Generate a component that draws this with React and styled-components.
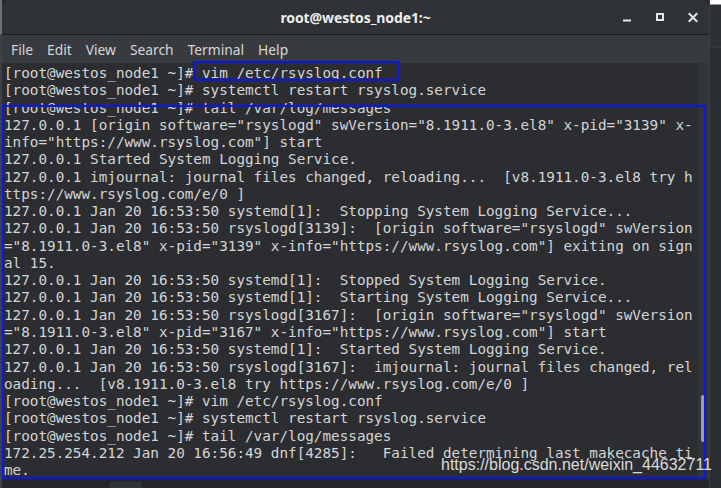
import React from "react";
import styled, { createGlobalStyle } from "styled-components";

const GlobalStyle = createGlobalStyle`
  html, body { margin: 0; padding: 0; background: #26282b; overflow: hidden; }
  #root { width: 721px; height: 488px; }
`;

const Page = styled.div`
  position: relative;
  display: flex;
  width: 721px;
  height: 488px;
  background: #26282b;
  overflow: hidden;
`;

const LeftEdge = styled.div`
  width: 2px;
  flex: none;
  background: linear-gradient(#6e7073 0, #6e7073 34px, #3d4044 35px, #3d4044 100%);
`;

const Window = styled.div`
  width: 707px;
  flex: none;
  display: flex;
  flex-direction: column;
`;

const Frame = styled.div`
  display: flex;
  flex-direction: column;
  height: 479px;
  border-radius: 7px 7px 0 0;
  overflow: hidden;
  background: #2c2e32;
`;

const TitleBar = styled.div`
  height: 34px;
  flex: none;
  display: grid;
  grid-template-columns: 1fr auto 1fr;
  align-items: center;
  background: #2f3236;
  border-bottom: 1px solid #1c1e21;
`;

const Title = styled.div`
  grid-column: 2;
  font-family: "Noto Sans", "DejaVu Sans", sans-serif;
  font-weight: 700;
  font-size: 14px;
  color: #eeeeec;
  letter-spacing: -0.1px;
`;

const Controls = styled.div`
  grid-column: 3;
  justify-self: end;
  display: flex;
  gap: 17px;
  padding-right: 8px;
  color: #e6e6e6;
  svg { display: block; }
`;

const MenuBar = styled.div`
  height: 28px;
  flex: none;
  display: flex;
  align-items: center;
  gap: 14px;
  padding-left: 9px;
  background: #373a3f;
`;

const MenuItem = styled.span`
  font-family: "Noto Sans", "DejaVu Sans", sans-serif;
  font-size: 13.8px;
  color: #d6d7d8;
`;

const TermArea = styled.div`
  flex: 1;
  display: flex;
  background: #2b2d31;
  min-height: 0;
`;

const TermText = styled.pre`
  flex: 1;
  margin: 0;
  padding: 2px 0 0 2px;
  font-family: "DejaVu Sans Mono", monospace;
  font-size: 14.3px;
  line-height: 17.26px;
  color: #d4d5d6;
  white-space: pre;
  overflow: hidden;
`;

const ScrollTrack = styled.div`
  width: 11px;
  flex: none;
  display: flex;
  flex-direction: column;
  padding-top: 332px;
  background: #313438;
`;

const ScrollThumb = styled.div`
  width: 4px;
  height: 47px;
  margin-left: 3px;
  border-radius: 2px;
  background: #9c9ea1;
`;

const BottomStrip = styled.div`
  flex: 1;
  display: flex;
  padding-left: 108px;
  padding-top: 3px;
  background: #24262a;
`;

const BottomBlock = styled.div`
  width: 32px;
  background: #303337;
`;

const RightSide = styled.div`
  flex: 1;
  border-left: 1px solid #3b3e42;
  background: linear-gradient(#ffffff 0, #ffffff 4px, #2d3034 5px, #2d3034 46px, #3a3d41 47px, #2a2d30 48px, #2a2d30 100%);
`;

const Mark = styled.div`
  position: absolute;
  left: ${(p) => p.$x}px;
  top: ${(p) => p.$y}px;
  width: ${(p) => p.$w}px;
  height: ${(p) => p.$h}px;
  box-sizing: border-box;
  border: 2px solid #0c14f0;
  pointer-events: none;
`;

const Watermark = styled.div`
  position: absolute;
  left: 441px;
  top: 456px;
  font-family: "Liberation Sans", Arial, sans-serif;
  font-size: 16px;
  color: rgba(236, 236, 236, 0.92);
  white-space: nowrap;
`;

const lines = [
  "[root@westos_node1 ~]# vim /etc/rsyslog.conf",
  "[root@westos_node1 ~]# systemctl restart rsyslog.service",
  "[root@westos_node1 ~]# tail /var/log/messages",
  '127.0.0.1 [origin software="rsyslogd" swVersion="8.1911.0-3.el8" x-pid="3139" x-',
  'info="https://www.rsyslog.com"] start',
  "127.0.0.1 Started System Logging Service.",
  "127.0.0.1 imjournal: journal files changed, reloading...  [v8.1911.0-3.el8 try h",
  "ttps://www.rsyslog.com/e/0 ]",
  "127.0.0.1 Jan 20 16:53:50 systemd[1]:  Stopping System Logging Service...",
  '127.0.0.1 Jan 20 16:53:50 rsyslogd[3139]:  [origin software="rsyslogd" swVersion',
  '="8.1911.0-3.el8" x-pid="3139" x-info="https://www.rsyslog.com"] exiting on sign',
  "al 15.",
  "127.0.0.1 Jan 20 16:53:50 systemd[1]:  Stopped System Logging Service.",
  "127.0.0.1 Jan 20 16:53:50 systemd[1]:  Starting System Logging Service...",
  '127.0.0.1 Jan 20 16:53:50 rsyslogd[3167]:  [origin software="rsyslogd" swVersion',
  '="8.1911.0-3.el8" x-pid="3167" x-info="https://www.rsyslog.com"] start',
  "127.0.0.1 Jan 20 16:53:50 systemd[1]:  Started System Logging Service.",
  "127.0.0.1 Jan 20 16:53:50 rsyslogd[3167]:  imjournal: journal files changed, rel",
  "oading...  [v8.1911.0-3.el8 try https://www.rsyslog.com/e/0 ]",
  "[root@westos_node1 ~]# vim /etc/rsyslog.conf",
  "[root@westos_node1 ~]# systemctl restart rsyslog.service",
  "[root@westos_node1 ~]# tail /var/log/messages",
  "172.25.254.212 Jan 20 16:56:49 dnf[4285]:   Failed determining last makecache ti",
  "me.",
];

const MinIcon = () => (
  <svg width="16" height="16" viewBox="0 0 16 16">
    <rect x="4" y="10.5" width="8" height="2" fill="currentColor" />
  </svg>
);

const MaxIcon = () => (
  <svg width="16" height="16" viewBox="0 0 16 16">
    <rect x="5" y="5" width="6" height="6" fill="none" stroke="currentColor" strokeWidth="2" />
  </svg>
);

const CloseIcon = () => (
  <svg width="16" height="16" viewBox="0 0 16 16">
    <path d="M4.5 5 L11.5 12 M11.5 5 L4.5 12" stroke="currentColor" strokeWidth="2" strokeLinecap="square" />
  </svg>
);

export default function App() {
  return (
    <>
      <GlobalStyle />
      <Page>
        <LeftEdge />
        <Window>
          <Frame>
            <TitleBar>
              <Title>root@westos_node1:~</Title>
              <Controls>
                <MinIcon />
                <MaxIcon />
                <CloseIcon />
              </Controls>
            </TitleBar>
            <MenuBar>
              {["File", "Edit", "View", "Search", "Terminal", "Help"].map((m) => (
                <MenuItem key={m}>{m}</MenuItem>
              ))}
            </MenuBar>
            <TermArea>
              <TermText>{lines.join("\n")}</TermText>
              <ScrollTrack>
                <ScrollThumb />
              </ScrollTrack>
            </TermArea>
          </Frame>
          <BottomStrip>
            <BottomBlock />
          </BottomStrip>
        </Window>
        <RightSide />
        <Mark $x={193} $y={61} $w={206} $h={20} />
        <Mark $x={2} $y={105} $w={704} $h={374} />
        <Watermark>https://blog.csdn.net/weixin_44632711</Watermark>
      </Page>
    </>
  );
}
